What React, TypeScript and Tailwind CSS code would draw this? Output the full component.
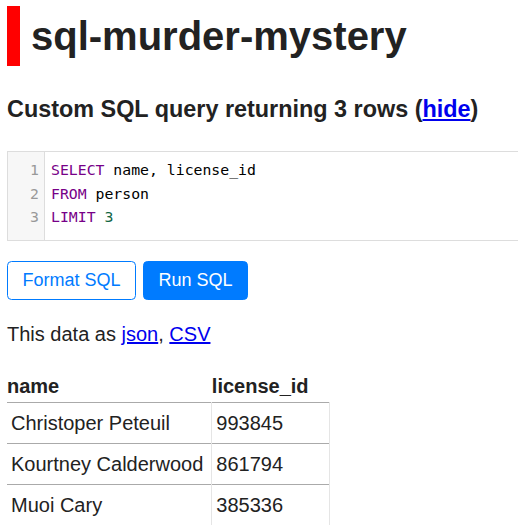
import React from "react";

const rows: [string, string][] = [
  ["Christoper Peteuil", "993845"],
  ["Kourtney Calderwood", "861794"],
  ["Muoi Cary", "385336"],
];

export default function App() {
  return (
    <div
      className="w-[518px] h-[527px] overflow-hidden bg-white text-[#222] pl-[7px]"
      style={{ fontFamily: '"Liberation Sans", Arial, sans-serif' }}
    >
      <h1 className="mt-[6px] border-l-[13px] border-[#ff0000] pl-[11px] text-[40px] leading-[60px] font-bold">
        sql-murder-mystery
      </h1>
      <h3 className="mt-[30px] text-[23.4px] leading-[26.9px] font-bold">
        Custom SQL query returning 3 rows (
        <a href="#" className="text-[#0000ee] underline">
          hide
        </a>
        )
      </h3>
      <div className="mt-[28px] w-[600px] h-[90px] border border-[#dddddd] flex">
        <div
          className="w-[37px] bg-[#f7f7f7] border-r border-[#dddddd] pt-[6px] pr-[5px] text-right text-[#999] text-[14.8px] leading-[23.7px]"
          style={{ fontFamily: '"DejaVu Sans Mono", monospace' }}
        >
          <div>1</div>
          <div>2</div>
          <div>3</div>
        </div>
        <div
          className="pl-[6px] pt-[6px] text-[14.8px] leading-[23.7px] text-black"
          style={{ fontFamily: '"DejaVu Sans Mono", monospace' }}
        >
          <div>
            <span className="text-[#770088]">SELECT</span> name, license_id
          </div>
          <div>
            <span className="text-[#770088]">FROM</span> person
          </div>
          <div>
            <span className="text-[#770088]">LIMIT</span>{" "}
            <span className="text-[#116644]">3</span>
          </div>
        </div>
      </div>
      <div className="mt-[20px] flex gap-[7px]">
        <button className="h-[39px] px-[14.5px] border border-[#007bff] rounded-[4.5px] bg-white text-[#007bff] text-[18px] leading-[27px]">
          Format SQL
        </button>
        <button className="h-[39px] px-[14.5px] border border-[#007bff] rounded-[4.5px] bg-[#007bff] text-white text-[18px] leading-[27px]">
          Run SQL
        </button>
      </div>
      <p className="mt-[23px] text-[20px] leading-[23px]">
        This data as{" "}
        <a href="#" className="text-[#0000ee] underline">
          json
        </a>
        ,{" "}
        <a href="#" className="text-[#0000ee] underline">
          CSV
        </a>
      </p>
      <table className="mt-[24px] border-collapse text-[20px] leading-[32px]">
        <thead>
          <tr>
            <th className="text-left font-bold pl-0 pr-[20px] py-0">name</th>
            <th className="text-left font-bold pl-0 pr-[21px] py-0">license_id</th>
          </tr>
        </thead>
        <tbody>
          {rows.map(([n, id]) => (
            <tr key={id}>
              <td className="border-t border-t-[#aaaaaa] border-r border-r-[#e5e5e5] pl-[4px] pr-[8px] py-[4px] whitespace-nowrap">
                {n}
              </td>
              <td className="border-t border-t-[#aaaaaa] border-r border-r-[#e5e5e5] pl-[4px] pr-[7px] py-[4px] whitespace-nowrap">
                {id}
              </td>
            </tr>
          ))}
        </tbody>
      </table>
    </div>
  );
}
